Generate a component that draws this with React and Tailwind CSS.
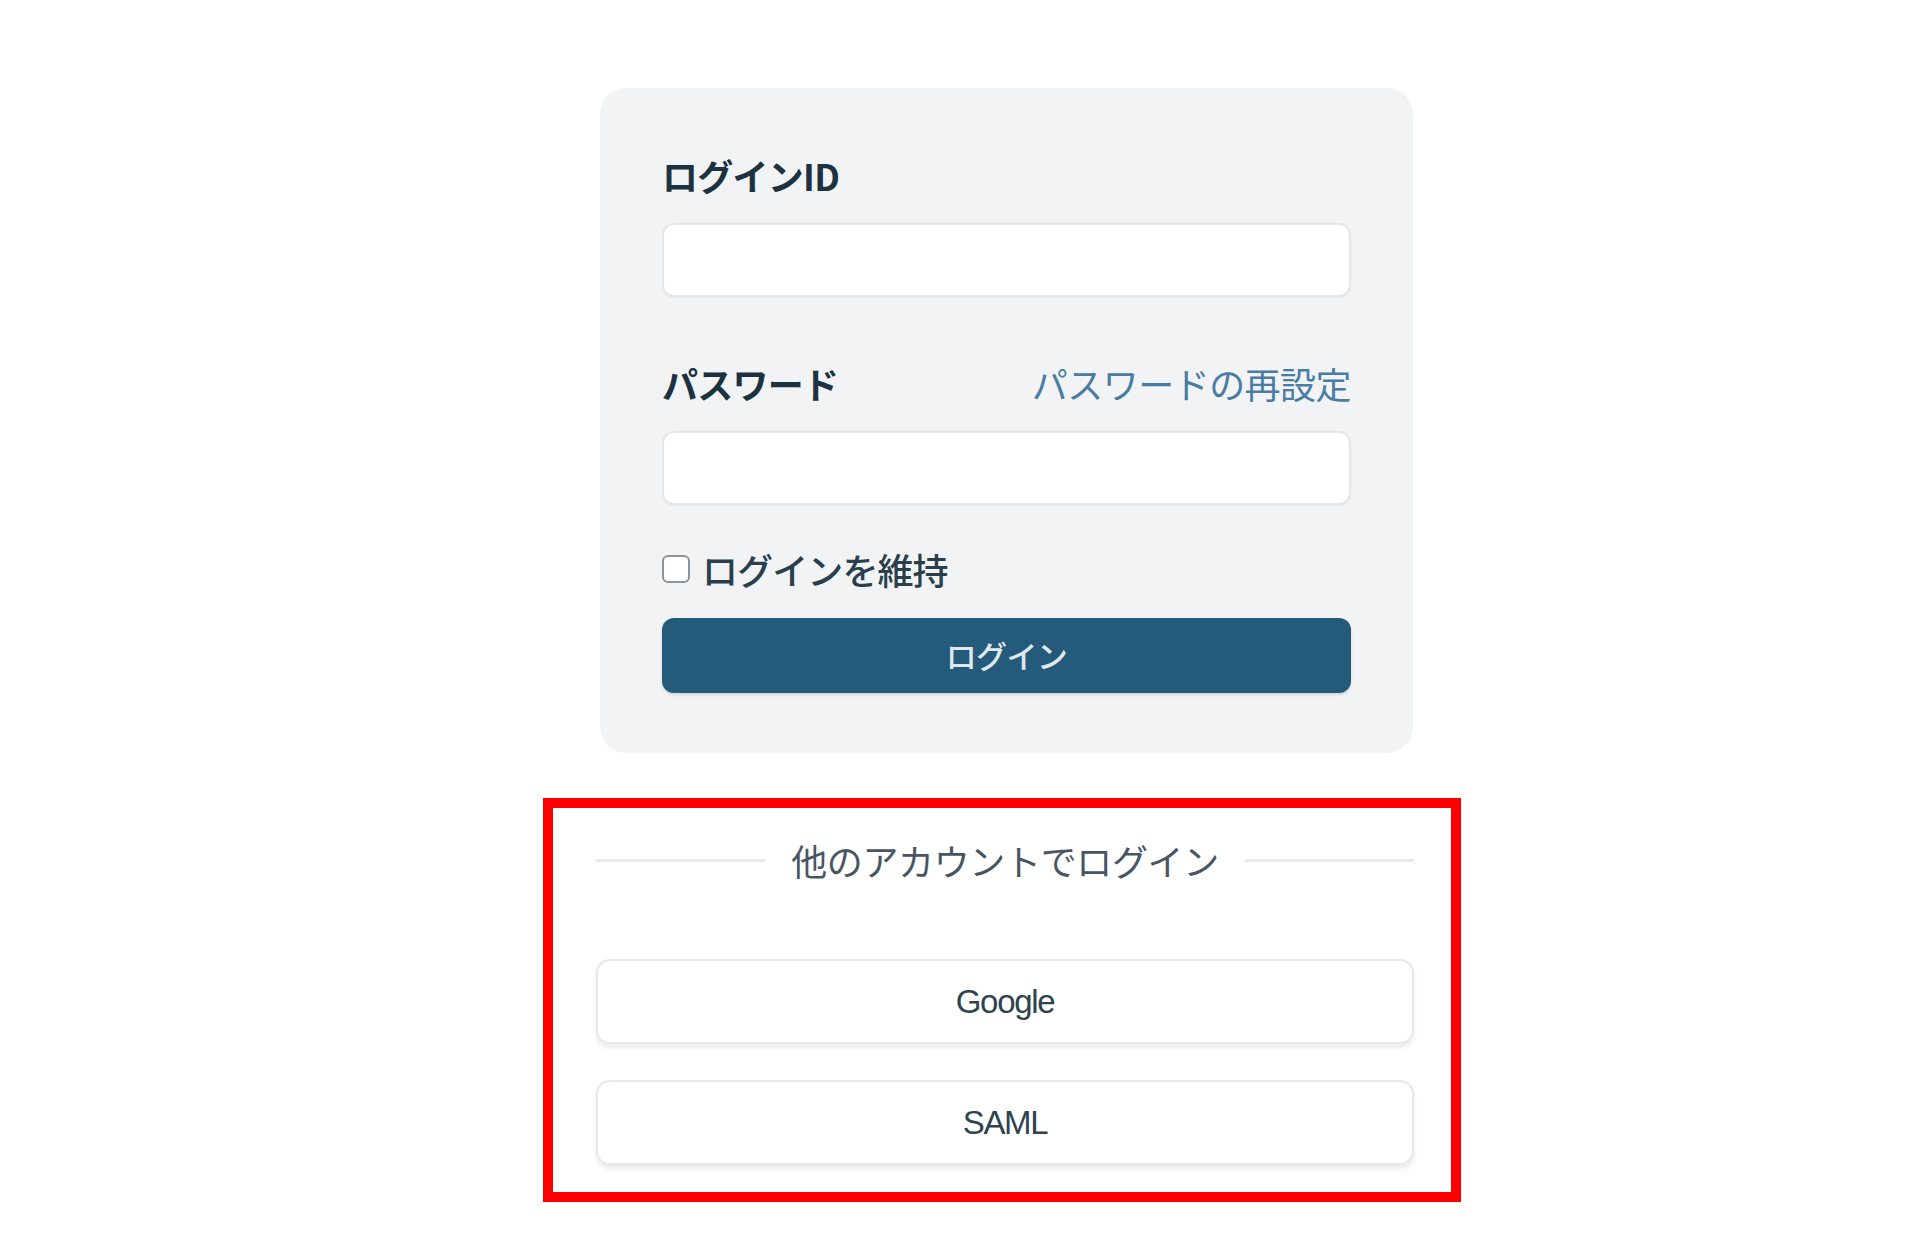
import React from "react";

const jp = { fontFamily: '"Noto Sans CJK JP", "Noto Sans", sans-serif' };
const latin = { fontFamily: '"Liberation Sans", "Noto Sans CJK JP", sans-serif' };

function Field({ label, right }) {
  return (
    <div className="flex flex-col gap-[26px]">
      <div className="flex h-[44px] items-center justify-between">
        <span className="text-[36px] font-bold leading-none tracking-[-0.02em] text-[#1d3240]">
          {label}
        </span>
        {right && (
          <a className="text-[36px] leading-none tracking-[-0.015em] text-[#4a7ca3]">{right}</a>
        )}
      </div>
      <input
        type="text"
        className="h-[74px] w-full rounded-[12px] border-2 border-[#e4e7ea] bg-white px-4 shadow-[0_1px_2px_rgba(0,0,0,0.04)] outline-none"
      />
    </div>
  );
}

function SocialButton({ children }) {
  return (
    <button
      className="flex h-[85px] w-full items-center justify-center rounded-[14px] border-2 border-[#e6e8ea] bg-white text-[33px] tracking-[-0.04em] text-[#2e4350] shadow-[0_4px_5px_rgba(0,0,0,0.08)]"
      style={latin}
    >
      {children}
    </button>
  );
}

export default function App() {
  return (
    <div className="min-h-[1237px] bg-white pl-[543px] pt-[88px]" style={jp}>
      <div className="flex w-[918px] flex-col">
        <section className="ml-[57px] flex w-[813px] flex-col rounded-[26px] bg-[#f1f3f5] px-[62px] pb-[60px] pt-[65px]">
          <Field label="ログインID" />
          <div className="mt-[64px]">
            <Field label="パスワード" right="パスワードの再設定" />
          </div>
          <label className="mt-[42px] flex h-[44px] items-center gap-[12px]">
            <span className="h-[28px] w-[28px] rounded-[6px] border-2 border-[#8c949b] bg-white" />
            <span className="text-[36px] font-medium leading-none tracking-[-0.025em] text-[#2b3e4b]">
              ログインを維持
            </span>
          </label>
          <button className="mt-[27px] flex h-[75px] w-full items-center justify-center rounded-[12px] bg-[#245a7a] text-[31px] font-medium tracking-[-0.02em] text-[#dfe8ee] shadow-[0_2px_3px_rgba(0,0,0,0.12)]">
            ログイン
          </button>
        </section>

        <div className="mt-[45px] border-[10px] border-[#ff0000] pb-[27px] pl-[43px] pr-[37px] pt-[30px]">
          <div className="flex h-[44px] items-center gap-[26px]">
            <div className="h-[3px] flex-1 bg-[#e7e9eb]" />
            <span className="text-[36px] leading-none tracking-[-0.01em] text-[#485662]">
              他のアカウントでログイン
            </span>
            <div className="h-[3px] flex-1 bg-[#e7e9eb]" />
          </div>
          <div className="mt-[77px] flex flex-col gap-[36px]">
            <SocialButton>Google</SocialButton>
            <SocialButton>SAML</SocialButton>
          </div>
        </div>
      </div>
    </div>
  );
}
